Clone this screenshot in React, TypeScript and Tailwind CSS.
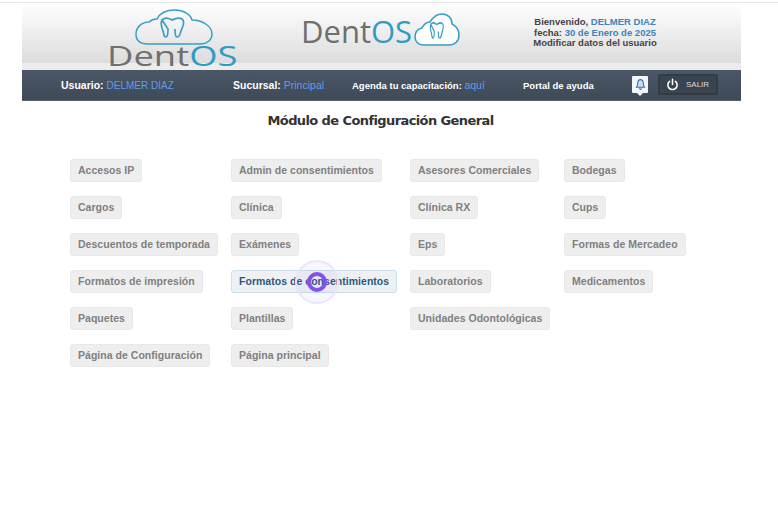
const modules = [
  ["Accesos IP", "Admin de consentimientos", "Asesores Comerciales", "Bodegas"],
  ["Cargos", "Clínica", "Clínica RX", "Cups"],
  ["Descuentos de temporada", "Exámenes", "Eps", "Formas de Mercadeo"],
  ["Formatos de impresión", "Formatos de consentimientos", "Laboratorios", "Medicamentos"],
  ["Paquetes", "Plantillas", "Unidades Odontológicas", ""],
  ["Página de Configuración", "Página principal", "", ""],
];

const ToothPath =
  "M4 3 C8 -1 12 2 14 3 C17 2 22 -1 25 3 C27 7 24 11 23 14 C22 17 22 20 19 20 C17 20 17 15 17 12 M10 12 C10 15 10 20 8 20 C5 20 6 16 5 14 C4 11 2 7 4 3 Z";

const LargeCloud = () => (
  <svg className="absolute left-[113px] top-[6px] w-[78px] h-[36px]" viewBox="0 0 78 36" fill="none" stroke="#3a9fc4">
    <path
      strokeWidth="1.5"
      d="M13 35 C5 35 1 31 1 25 C1 18 7 13 14 13 C16 11 19 10 22 10 C25 4 32 1 40 1 C49 1 56 6 57 11 C67 11 77 17 77 25 C77 31 72 35 65 35 Z"
    />
    <g transform="translate(23 8)">
      <path strokeWidth="1.7" d={ToothPath} />
    </g>
  </svg>
);

const SmallCloud = () => (
  <svg className="w-[46px] h-[33px] ml-[2px] mt-[-3px]" viewBox="0 0 46 33" fill="white" stroke="#3a9fc4">
    <path
      strokeWidth="1.6"
      d="M9 32 C4 32 1 28 1 24 C1 19 4 16 8 15 C10 11 13 9 16 9 C19 4 23 1 28 1 C34 1 38 5 38 11 C42 13 45 17 45 22 C45 28 41 32 35 32 Z"
    />
    <g transform="translate(14.5 9) scale(0.58 0.8)" fill="none">
      <path strokeWidth="2" d={ToothPath} />
    </g>
  </svg>
);

const ModuleButton = ({ label }: { label: string }) => {
  if (!label) return <div />;
  const active = label === "Formatos de consentimientos";
  return (
    <div className="flex">
      <a
        className={`relative h-[23px] px-[7px] flex items-center rounded-[3px] border text-[10.5px] font-bold tracking-[0.03px] whitespace-nowrap ${
          active
            ? "bg-[#eef1f4] border-[#c9dfeb] text-[#2f5880]"
            : "bg-[#eeeeee] border-[#e8e8e8] text-[#808080]"
        }`}
      >
        {label}
        {active && (
          <span className="absolute left-[63px] top-[-11px] w-[44px] h-[44px] rounded-full border-2 border-[#e9e4fb] bg-[#7c4dea]/5 flex items-center justify-center">
            <span className="w-[20px] h-[20px] rounded-full border-[4px] border-[#8352e6]" />
          </span>
        )}
      </a>
    </div>
  );
};

export default function App() {
  return (
    <div className="w-[778px] h-[508px] bg-white overflow-hidden font-['Liberation_Sans',sans-serif]">
      <div className="h-[3px] border-b border-[#e6e6e6]" />
      <div className="w-[719px] ml-[22px]">
        <div className="h-[60px] bg-gradient-to-b from-white to-[#dcdcdc] flex relative z-0">
          <div className="w-[279px] relative shrink-0">
            <LargeCloud />
            <span className="absolute left-[85px] top-[37px] origin-left scale-x-[1.3] text-[28px] leading-[30px] text-[#6f6f6f] font-['Open_Sans',sans-serif] z-10">
              Dent<span className="text-[#2f9cc0]">OS</span>
            </span>
          </div>
          <div className="flex items-center h-[60px] mt-[-2px]">
            <span className="text-[31px] leading-none text-[#6f6f6f] font-['Open_Sans',sans-serif]">
              Dent<span className="text-[#2f9cc0]">OS</span>
            </span>
            <SmallCloud />
          </div>
          <div className="absolute left-[503px] top-[14px] w-[140px] text-center text-[9.5px] leading-[10.5px] font-bold text-[#444444] whitespace-nowrap">
            <div>
              Bienvenido, <span className="text-[#3f83bd]">DELMER DIAZ</span>
            </div>
            <div>
              fecha: <span className="text-[#3f83bd]">30 de Enero de 2025</span>
            </div>
            <div>Modificar datos del usuario</div>
          </div>
        </div>
        <div className="h-[7px] bg-[#ececec]" />
        <div className="h-[31px] pt-[2px] bg-gradient-to-b from-[#4b5666] to-[#3f4a59] border-b border-[#59606c] flex items-center text-[10.5px] font-bold text-white whitespace-nowrap relative">
          <span className="ml-[39px] w-[172px]">
            Usuario: <span className="font-normal text-[10px] text-[#5b9fe8]">DELMER DIAZ</span>
          </span>
          <span className="w-[119px]">
            Sucursal: <span className="font-normal text-[#5b9fe8]">Principal</span>
          </span>
          <span className="w-[171px] text-[9.5px]">
            Agenda tu capacitación: <span className="font-normal text-[10.5px] text-[#5b9fe8]">aquí</span>
          </span>
          <span className="text-[9.5px]">Portal de ayuda</span>
          <div className="absolute left-[610px] top-[6px] w-[16px] h-[17px] bg-[#f2f6fb] rounded-[1px] flex items-center justify-center">
            <svg viewBox="0 0 16 16" className="w-[13px] h-[13px]" fill="#c9dcef" stroke="#3d6f9f" strokeWidth="1.3">
              <path d="M8 2 C5 2 4.5 4.5 4.5 7 C4.5 9.5 3.5 10.5 3 11.5 H13 C12.5 10.5 11.5 9.5 11.5 7 C11.5 4.5 11 2 8 2 Z M6.5 13 C7 14.3 9 14.3 9.5 13" />
            </svg>
            <span className="absolute bottom-[-3px] w-0 h-0 border-x-[3px] border-x-transparent border-t-[3px] border-t-[#f2f6fb]" />
          </div>
          <div className="absolute left-[636px] top-[4px] w-[60px] h-[21px] bg-[#3a4350] border-2 border-[#333b47] rounded-[2px] flex items-center text-[8px] font-normal text-[#d8dde3]">
            <svg viewBox="0 0 14 14" className="w-[13px] h-[13px] ml-[6px] mr-[7px]" fill="none" stroke="white" strokeWidth="1.7" strokeLinecap="round">
              <path d="M7 1.5 V7 M3.8 3.6 A5 5 0 1 0 10.2 3.6" />
            </svg>
            SALIR
          </div>
        </div>
      </div>
      <h1 className="mt-[11px] w-[719px] ml-[21px] text-center text-[13px] leading-[17px] font-bold text-[#333333] font-['DejaVu_Sans',sans-serif] tracking-[-0.6px]">
        Módulo de Configuración General
      </h1>
      <div className="mt-[30px] ml-[70px] grid grid-cols-[161px_179px_154px_1fr] auto-rows-[37px]">
        {modules.flat().map((label, i) => (
          <ModuleButton key={i} label={label} />
        ))}
      </div>
    </div>
  );
}
